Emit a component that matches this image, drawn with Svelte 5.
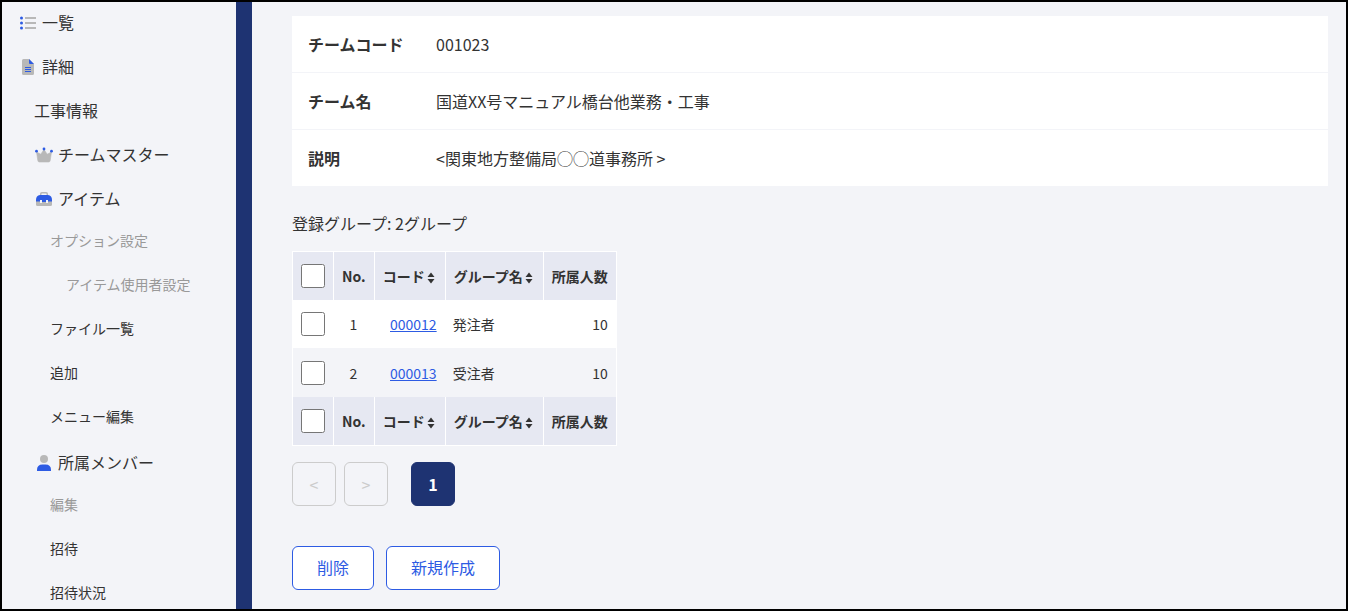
<script>
	const menu = [
		{ label: '一覧', icon: 'list', level: 0 },
		{ label: '詳細', icon: 'file', level: 0 },
		{ label: '工事情報', level: 1 },
		{ label: 'チームマスター', icon: 'crown', level: 1 },
		{ label: 'アイテム', icon: 'toolbox', level: 1 },
		{ label: 'オプション設定', level: 2, disabled: true },
		{ label: 'アイテム使用者設定', level: 3, disabled: true },
		{ label: 'ファイル一覧', level: 2 },
		{ label: '追加', level: 2 },
		{ label: 'メニュー編集', level: 2 },
		{ label: '所属メンバー', icon: 'member', level: 1 },
		{ label: '編集', level: 2, disabled: true },
		{ label: '招待', level: 2 },
		{ label: '招待状況', level: 2 }
	];

	const details = [
		{ label: 'チームコード', value: '001023' },
		{ label: 'チーム名', value: '国道XX号マニュアル橋台他業務・工事' },
		{ label: '説明', value: '<関東地方整備局◯◯道事務所 >' }
	];

	let groups = $state([
		{ code: '000012', name: '発注者', members: 10, checked: false },
		{ code: '000013', name: '受注者', members: 10, checked: false }
	]);

	let allChecked = $derived(groups.length > 0 && groups.every((g) => g.checked));

	function toggleAll(e) {
		const checked = e.currentTarget.checked;
		groups.forEach((g) => (g.checked = checked));
	}

	function sortBy(key) {
		groups.sort((a, b) => a[key].localeCompare(b[key], 'ja'));
	}

	function removeChecked() {
		groups = groups.filter((g) => !g.checked);
	}
</script>

{#snippet icon(name)}
	{#if name === 'list'}
		<svg class="icon" viewBox="0 0 16 16" aria-hidden="true">
			<path d="M5 3h11M5 8h11M5 13h11" stroke="#b8b8b8" stroke-width="2" />
			<circle cx="1.5" cy="3" r="1.5" fill="#2d5be3" />
			<circle cx="1.5" cy="8" r="1.5" fill="#2d5be3" />
			<circle cx="1.5" cy="13" r="1.5" fill="#2d5be3" />
		</svg>
	{:else if name === 'file'}
		<svg class="icon" viewBox="0 0 16 16" aria-hidden="true">
			<path d="M3.5 0H9l5 5v9.5a1.5 1.5 0 0 1-1.5 1.5h-9A1.5 1.5 0 0 1 2 14.5v-13A1.5 1.5 0 0 1 3.5 0z" fill="#b8b8b8" />
			<path d="M9 0l5 5H10q-1 0-1-1z" fill="#2d5be3" />
			<path d="M5 8.5h6M5 10.5h6M5 12.5h6" stroke="#2d5be3" stroke-width="1" />
		</svg>
	{:else if name === 'crown'}
		<svg class="icon" viewBox="0 0 18 16" aria-hidden="true">
			<path d="M1.5 5L5.8 7.2L9 2.5L12.2 7.2L16.5 5L15.2 13.5Q15 15 13.500 15H4.500Q3 15 2.800 13.500z" fill="#b8b8b8" stroke="#b8b8b8" stroke-width="0.6" />
			<circle cx="1.5" cy="4.2" r="1.4" fill="#2d5be3" />
			<circle cx="9" cy="2" r="1.4" fill="#2d5be3" />
			<circle cx="16.5" cy="4.2" r="1.4" fill="#2d5be3" />
		</svg>
	{:else if name === 'toolbox'}
		<svg class="icon" viewBox="0 0 16 16" aria-hidden="true">
			<path d="M4.7 5V3q0-1.2 1.2-1.2h4.2q1.2 0 1.2 1.2v2" fill="none" stroke="#b8b8b8" stroke-width="1.5" />
			<path d="M0 10h16v3.5q0 1.5-1.5 1.5h-13Q0 15 0 13.5z" fill="#b8b8b8" />
			<path d="M4 4h8Q16 4.5 16 9v1.5H0V9Q0 4.5 4 4z" fill="#2d5be3" />
			<path d="M4 9h2v3H4zM10 9h2v3h-2z" fill="#f3f4f8" />
			<path d="M6 9h4v2H6z" fill="#2d5be3" />
		</svg>
	{:else}
		<svg class="icon" viewBox="0 0 16 16" aria-hidden="true">
			<circle cx="8" cy="4" r="4" fill="#b8b8b8" />
			<path d="M1 16v-1q0-5.500 5.500-5.500h3q5.500 0 5.500 5.500v1z" fill="#2d5be3" />
		</svg>
	{/if}
{/snippet}

{#snippet sortIcon()}
	<svg class="sort" viewBox="0 0 8 12" aria-hidden="true">
		<path d="M4 0.5L7.5 5H0.5zM4 11.5L0.5 7h7z" fill="#333" />
	</svg>
{/snippet}

{#snippet headings(id)}
	<tr>
		<th><input type="checkbox" id={id} aria-label="すべて選択" checked={allChecked} onchange={toggleAll} /></th>
		<th>No.</th>
		<th><button class="sort-button" onclick={() => sortBy('code')}>コード{@render sortIcon()}</button></th>
		<th><button class="sort-button" onclick={() => sortBy('name')}>グループ名{@render sortIcon()}</button></th>
		<th>所属人数</th>
	</tr>
{/snippet}

<div class="layout">
	<nav class="sidebar">
		<ul>
			{#each menu as item}
				<li class="level-{item.level}">
					{#if item.disabled}
						<span class="item disabled">{item.label}</span>
					{:else}
						<a class="item" href="#menu">
							{#if item.icon}{@render icon(item.icon)}{/if}
							{item.label}
						</a>
					{/if}
				</li>
			{/each}
		</ul>
	</nav>

	<main>
		<dl class="details">
			{#each details as row}
				<div class="details-row">
					<dt>{row.label}</dt>
					<dd>{row.value}</dd>
				</div>
			{/each}
		</dl>

		<p class="summary">登録グループ: {groups.length}グループ</p>

		<table>
			<thead>{@render headings('check-all-top')}</thead>
			<tbody>
				{#each groups as group, i}
					<tr>
						<td><input type="checkbox" aria-label={group.name} bind:checked={group.checked} /></td>
						<td class="center">{i + 1}</td>
						<td class="right"><a href="#group">{group.code}</a></td>
						<td>{group.name}</td>
						<td class="right">{group.members}</td>
					</tr>
				{/each}
			</tbody>
			<tfoot>{@render headings('check-all-bottom')}</tfoot>
		</table>

		<div class="pagination">
			<button class="page" disabled>&lt;</button>
			<button class="page" disabled>&gt;</button>
			<button class="page current" aria-current="page">1</button>
		</div>

		<div class="actions">
			<button class="action" onclick={removeChecked}>削除</button>
			<button class="action">新規作成</button>
		</div>
	</main>
</div>

<style>
	:global(body) {
		margin: 0;
		background: #f3f4f8;
		color: #333;
		font-family: 'Noto Sans CJK JP', sans-serif;
		font-size: 16px;
		line-height: 24px;
	}

	button {
		font: inherit;
		color: inherit;
		cursor: pointer;
	}

	.layout {
		display: flex;
		box-sizing: border-box;
		height: 100vh;
		border: 2px solid #000;
	}

	/* Sidebar */
	.sidebar {
		flex: 0 0 234px;
		overflow-y: auto;
		scrollbar-width: none;
		border-right: 16px solid #1e3372;
	}

	.sidebar ul {
		margin: 0;
		padding: 0;
		list-style: none;
	}

	.item {
		display: flex;
		align-items: center;
		gap: 4px;
		padding: 8px 16px 12px;
		color: #333;
		text-decoration: none;
	}

	.level-1 .item {
		padding-left: 32px;
	}

	.level-2 .item,
	.level-3 .item {
		padding-top: 6px;
		padding-bottom: 14px;
		padding-left: 48px;
		font-size: 14px;
	}

	.level-3 .item {
		padding-left: 64px;
	}

	.item.disabled {
		color: #999;
	}

	.icon {
		flex: none;
		width: 20px;
		height: 16px;
		margin-top: 2px;
	}

	/* Main column */
	main {
		flex: 1;
		min-width: 0;
		padding: 14px 18px 16px 40px;
		overflow-y: auto;
		scrollbar-width: none;
	}

	.details {
		margin: 0;
		background: #fff;
	}

	.details-row {
		display: flex;
		padding: 16px;
	}

	.details-row + .details-row {
		border-top: 1px solid #f3f4f8;
	}

	dt {
		flex: 0 0 128px;
		font-weight: 700;
	}

	dd {
		margin: 0;
	}

	.summary {
		margin: 25px 0 16px;
	}

	table {
		border: 1px solid #fff;
		border-collapse: separate;
		border-spacing: 0;
		font-size: 14px;
	}

	th,
	td {
		box-sizing: border-box;
		height: 48px;
		padding: 0 8px;
		text-align: left;
		white-space: nowrap;
	}

	th {
		background: #e6e8f2;
		font-weight: 700;
	}

	th + th {
		border-left: 1px solid #fff;
	}

	tbody tr:nth-child(odd) {
		background: #fff;
	}

	tbody tr:nth-child(even) td {
		height: 49px;
	}

	td.center {
		text-align: center;
	}

	td.right {
		text-align: right;
	}

	td a {
		color: #2d5be3;
	}

	input[type='checkbox'] {
		display: block;
		width: 24px;
		height: 24px;
		margin: 0;
	}

	.sort-button {
		display: flex;
		align-items: center;
		gap: 2px;
		padding: 0 2px 0 0;
		border: 0;
		background: none;
	}

	.sort {
		width: 8px;
		height: 12px;
		margin-top: 4px;
	}

	.pagination {
		display: flex;
		gap: 8px;
		margin-top: 16px;
	}

	.page {
		width: 44px;
		height: 44px;
		padding: 0;
		border: 1px solid #ccc;
		border-radius: 6px;
		background: none;
	}

	.page:disabled {
		color: #ccc;
		cursor: default;
	}

	.page.current {
		margin-left: 15px;
		border-color: #1e3372;
		background: #1e3372;
		color: #fff;
		font-weight: 700;
	}

	.actions {
		display: flex;
		gap: 12px;
		margin-top: 40px;
	}

	.action {
		height: 44px;
		padding: 0 24px 2px;
		border: 1px solid #2d5be3;
		border-radius: 6px;
		background: #fff;
		color: #2d5be3;
	}
</style>
